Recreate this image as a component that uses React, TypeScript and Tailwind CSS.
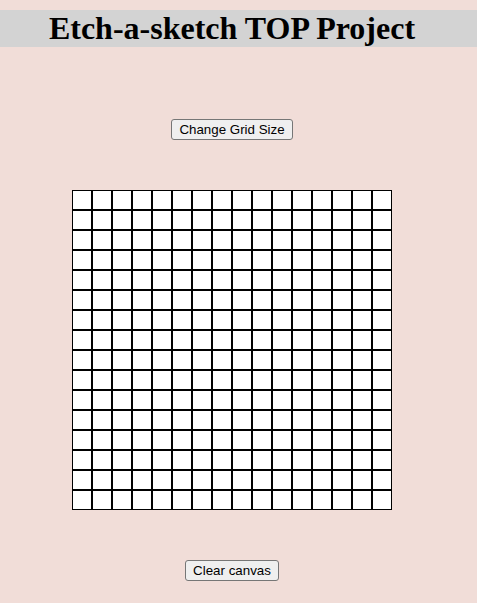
import React, { useState } from 'react';

const btnClass =
  "h-[21px] px-[7px] bg-[#efefef] border border-[#767676] rounded-[3px] font-['Liberation_Sans',Arial,sans-serif] text-[13.33px] leading-none text-black";

const App = () => {
  const [size, setSize] = useState(16);
  const [filled, setFilled] = useState<Record<number, boolean>>({});

  const changeSize = () => {
    const input = window.prompt('Enter grid size (1-100)', String(size));
    const n = Number(input);
    if (n > 0 && n <= 100) {
      setSize(n);
      setFilled({});
    }
  };

  const cellSize = 320 / size;

  return (
    <div className="min-h-[603px] bg-[#f1ddd8] pt-[10px] font-['Liberation_Serif',serif]">
      <h1 className="bg-[#d3d3d3] h-[37px] pr-[13px] text-center text-[32px] font-bold leading-[37px] text-black">
        Etch-a-sketch TOP Project
      </h1>
      <div className="flex flex-col items-center pr-[13px]">
        <button onClick={changeSize} className={`mt-[72px] ${btnClass}`}>
          Change Grid Size
        </button>
        <div
          className="mt-[50px] grid w-[320px] h-[320px]"
          style={{ gridTemplateColumns: `repeat(${size}, ${cellSize}px)` }}
        >
          {Array.from({ length: size * size }).map((_, i) => (
            <div
              key={i}
              onMouseEnter={() => setFilled((f) => ({ ...f, [i]: true }))}
              className={`border border-black ${filled[i] ? 'bg-black' : 'bg-white'}`}
              style={{ height: cellSize }}
            />
          ))}
        </div>
        <button onClick={() => setFilled({})} className={`mt-[50px] ${btnClass}`}>
          Clear canvas
        </button>
      </div>
    </div>
  );
};

export default App;
